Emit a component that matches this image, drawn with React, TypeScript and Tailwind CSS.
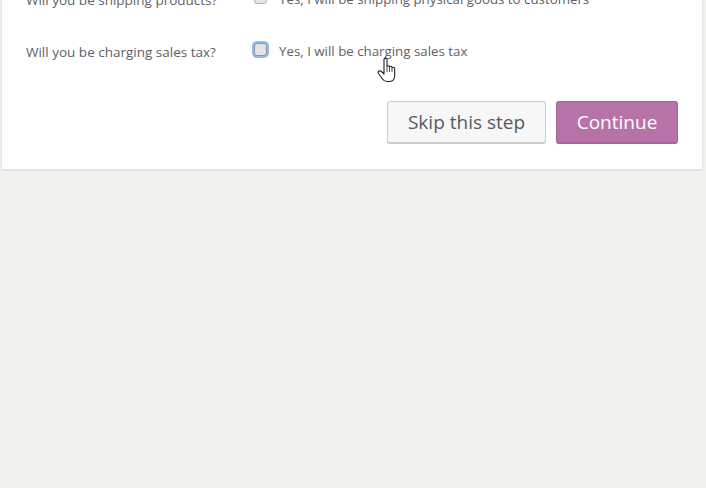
import React from "react";

function Cursor() {
  return (
    <svg width="20" height="26" viewBox="0 0 20 26" className="absolute left-[377px] top-[57px]" fill="#fff" stroke="#222" strokeWidth="1.1" strokeLinejoin="round">
      <path d="M7 2.500c0-1.800 3-1.800 3 0V9.500c0-1 2.500-1 2.500 0.300V10c0-1 2.500-1 2.500 0.300v.7c0-1 2.700-1 2.700.3V18c0 3.500-1.700 6.500-5 6.500H10c-2.500 0-3.500-1-4.500-2.500L1.500 16.500c-.8-1.200-.2-2.500 1-2.600.9-.1 1.700.3 2.500 1.100L7 17V2.500z" />
      <path d="M10 10v5M12.500 10v5M15 11v4" fill="none" strokeWidth="0.8" />
    </svg>
  );
}

function Row({ q, a, checked }: { q: string; a: string; checked?: boolean }) {
  return (
    <div className="flex items-center h-[20px]">
      <div className="w-[228px] shrink-0 text-[13.5px]">{q}</div>
      <div className={checked ? "w-[13px] h-[13px] mb-[5px] shrink-0 rounded-[3px] border border-[#c9a3b8] bg-[#e9e3ea]" : "w-[13px] h-[13px] mb-[5px] shrink-0 rounded-[3px] border border-[#8f8fa8] bg-[#e4e4e8] shadow-[0_0_0_2px_#8dbdf0]"} />
      <div className="ml-[12px]">{a}</div>
    </div>
  );
}

export default function App() {
  return (
    <div className="relative h-[488px] w-[706px] overflow-hidden bg-[#f1f1f0] text-[#5f5f66] text-[13.3px] font-['Open_Sans','Noto_Sans',sans-serif]">
      <div className="flow-root ml-[2px] w-[700px] h-[169px] bg-white shadow-[0_1px_3px_rgba(0,0,0,0.13)] px-[24px]">
        <div className="flex flex-col gap-[32px] -mt-[10px]">
          <Row q="Will you be shipping products?" a="Yes, I will be shipping physical goods to customers" checked />
          <Row q="Will you be charging sales tax?" a="Yes, I will be charging sales tax" />
        </div>
        <div className="flex justify-end gap-[10px] mt-[39px] text-[19px]">
          <button className="w-[159px] h-[43px] rounded-[3px] border border-[#cccccc] border-b-2 bg-[#f7f7f7] text-[#555a60]">Skip this step</button>
          <button className="w-[122px] h-[43px] rounded-[3px] border border-[#a3659a] border-b-2 bg-[#b773a8] text-white">Continue</button>
        </div>
      </div>
      <Cursor />
    </div>
  );
}
